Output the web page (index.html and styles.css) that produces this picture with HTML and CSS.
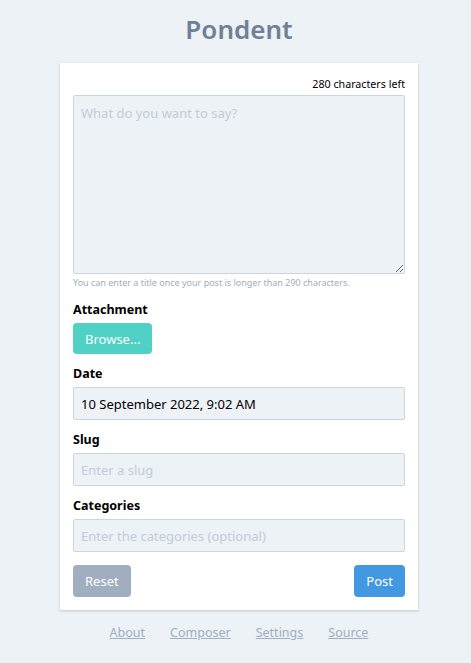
FILE: index.html
```html
<!DOCTYPE html>
<html lang="en">
<head>
    <meta charset="UTF-8">
    <meta name="viewport" content="width=device-width, initial-scale=1.0">
    <title>Pondent</title>
    <link rel="stylesheet" href="styles.css">
</head>
<body>

<!-- 标题 -->
<h1 class="site-title">Pondent</h1>

<!-- 发帖卡片 -->
<div class="composer">
    <div class="counter">280 characters left</div>
    <textarea class="post-text" placeholder="What do you want to say?"></textarea>
    <div class="hint">You can enter a title once your post is longer than 290 characters.</div>

    <div class="field">
        <label class="field-label">Attachment</label>
        <button type="button" class="btn btn-browse">Browse...</button>
    </div>

    <div class="field">
        <label class="field-label" for="date">Date</label>
        <input id="date" class="text-input" type="text" value="10 September 2022, 9:02 AM">
    </div>

    <div class="field">
        <label class="field-label" for="slug">Slug</label>
        <input id="slug" class="text-input" type="text" placeholder="Enter a slug">
    </div>

    <div class="field">
        <label class="field-label" for="cats">Categories</label>
        <input id="cats" class="text-input" type="text" placeholder="Enter the categories (optional)">
    </div>

    <div class="actions">
        <button type="button" class="btn btn-reset">Reset</button>
        <button type="button" class="btn btn-post">Post</button>
    </div>
</div>

<!-- 底部链接 -->
<div class="footer">
    <a href="#">About</a>
    <a href="#">Composer</a>
    <a href="#">Settings</a>
    <a href="#">Source</a>
</div>

</body>
</html>
```

FILE: styles.css
```css
/* 页面整体 */
body {
    margin: 0;
    padding: 0 0 0 7px;
    background-color: #edf2f7;
    font-family: "Noto Sans", "Open Sans", sans-serif;
    color: #000;
}

/* 标题 */
.site-title {
    margin: 0;
    padding-top: 11px;
    height: 52px;
    text-align: center;
    font-size: 26px;
    font-weight: 600;
    line-height: 36px;
    color: #718096;
}

/* 卡片 */
.composer {
    width: 332px;
    margin: 0 auto;
    padding: 13px;
    background: #fff;
    box-shadow: 0 1px 3px rgba(0, 0, 0, 0.12), 0 1px 2px rgba(0, 0, 0, 0.08);
}

.counter {
    text-align: right;
    font-size: 10.7px;
    line-height: 16px;
    margin-bottom: 3px;
}

.post-text {
    display: block;
    box-sizing: border-box;
    width: 100%;
    height: 179px;
    margin: 0;
    padding: 8px 7px;
    background: #edf2f7;
    border: 1px solid #cbd5e0;
    border-radius: 2px;
    font-family: inherit;
    font-size: 13px;
    resize: vertical;
}

.post-text::placeholder,
.text-input::placeholder {
    color: #c3cbd6;
}

.hint {
    font-size: 9px;
    line-height: 14px;
    margin-top: 2px;
    color: #a0aec0;
}

/* 表单项 */
.field {
    margin-top: 11px;
}

.field-label {
    display: block;
    font-size: 12.5px;
    font-weight: bold;
    line-height: 18px;
    margin-bottom: 4px;
}

.text-input {
    display: block;
    box-sizing: border-box;
    width: 100%;
    height: 33px;
    margin: 0;
    padding: 0 7px;
    background: #edf2f7;
    border: 1px solid #cbd5e0;
    border-radius: 2px;
    font-family: inherit;
    font-size: 13px;
    color: #000;
}

/* 按钮 */
.btn {
    height: 32px;
    padding: 0 12px;
    border: none;
    border-radius: 4px;
    color: #fff;
    font-family: inherit;
    font-size: 13px;
    cursor: pointer;
}

.btn-browse {
    height: 31px;
    background: #4fd1c5;
}

.btn-reset {
    background: #a0aec0;
}

.btn-post {
    background: #4299e1;
}

.actions {
    display: flex;
    justify-content: space-between;
    margin-top: 13px;
}

/* 底部 */
.footer {
    display: flex;
    justify-content: center;
    gap: 25px;
    padding-top: 14px;
    font-size: 12.5px;
}

.footer a {
    color: #a0aec0;
}
```
